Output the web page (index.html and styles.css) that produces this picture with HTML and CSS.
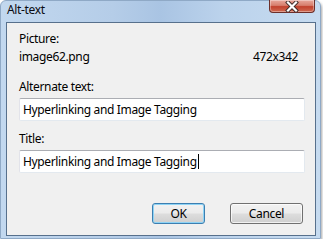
FILE: index.html
```html
<!DOCTYPE html>
<html>
<head>
<meta charset="utf-8">
<link rel="stylesheet" href="styles.css">
</head>
<body>
<div class="window">
  <div class="titlebar">
    <span class="title">Alt-text</span>
    <div class="close">
      <svg width="16" height="11" viewBox="0 0 16 11">
        <path d="M4 1.5 L12 9.5 M12 1.5 L4 9.5" stroke="#3b2a28" stroke-width="4" stroke-linecap="square"/>
        <path d="M4 1.5 L12 9.5 M12 1.5 L4 9.5" stroke="#ffffff" stroke-width="2.2" stroke-linecap="square"/>
      </svg>
    </div>
  </div>
  <div class="content">
    <div class="label first">Picture:</div>
    <div class="info-row"><span>image62.png</span><span class="dims">472x342</span></div>
    <div class="label gap1">Alternate text:</div>
    <div class="field">Hyperlinking and Image Tagging</div>
    <div class="label gap2">Title:</div>
    <div class="field">Hyperlinking and Image Tagging<span class="caret"></span></div>
    <div class="buttons">
      <div class="btn ok">OK</div>
      <div class="btn cancel">Cancel</div>
    </div>
  </div>
</div>
</body>
</html>
```
FILE: styles.css
```css
html, body {
  margin: 0;
  padding: 0;
  background: #ffffff;
}
body {
  font-family: "Noto Sans", "DejaVu Sans", sans-serif;
  font-size: 12px;
  letter-spacing: -0.35px;
  color: #000;
}
.window {
  position: relative;
  width: 321px;
  height: 239px;
  box-sizing: border-box;
  background: linear-gradient(to right, #c2d8ef 0%, #b5cde8 35%, #a9c4e3 50%, #bcd3ec 70%, #c6dbf0 100%);
  border: 1px solid #8fa9c6;
  border-radius: 6px 6px 0 0;
  box-shadow: 1px 2px 3px rgba(0,0,0,0.35);
  display: flex;
  flex-direction: column;
}
.titlebar {
  height: 21px;
  display: flex;
  align-items: flex-start;
}
.title {
  padding-left: 6px;
  line-height: 18px;
  color: #0b0b12;
}
.close {
  position: absolute;
  top: -1px;
  left: 268px;
  width: 46px;
  height: 13px;
  box-sizing: border-box;
  border: 1px solid #6c2f2a;
  border-top: none;
  border-radius: 0 0 4px 4px;
  background: linear-gradient(to bottom, #e8a89c 0%, #d77e6d 45%, #c2412d 55%, #cf6a52 100%);
  display: flex;
  align-items: center;
  justify-content: center;
  box-shadow: inset 0 0 0 1px rgba(255,255,255,0.35);
}
.content {
  margin: 0 4px 2px 5px;
  flex: 1;
  background: #f0f0f0;
  border: 1px solid #57708c;
  padding: 0 0 0 12px;
  display: flex;
  flex-direction: column;
}
.label {
  line-height: 18px;
}
.label.first {
  margin-top: 7px;
}
.info-row {
  line-height: 18px;
  display: flex;
  justify-content: space-between;
  padding-right: 17px;
}
.label.gap1 {
  margin-top: 12px;
  margin-bottom: 2px;
}
.label.gap2 {
  margin-top: 9px;
  margin-bottom: 2px;
}
.field {
  width: 286px;
  height: 23px;
  box-sizing: border-box;
  background: #ffffff;
  border: 1px solid #e3e9ef;
  border-top-color: #abadb3;
  border-left-color: #e2e3ea;
  border-radius: 2px;
  padding-left: 3px;
  line-height: 20px;
  display: flex;
  align-items: center;
}
.caret {
  display: inline-block;
  width: 1px;
  height: 15px;
  background: #000;
  margin-left: 1px;
}
.buttons {
  margin-top: 30px;
  display: flex;
  justify-content: flex-end;
  gap: 25px;
  padding-right: 12px;
}
.btn {
  height: 21px;
  box-sizing: border-box;
  border: 1px solid #707070;
  border-radius: 3px;
  background: linear-gradient(to bottom, #f2f2f2 0%, #ebebeb 48%, #dddddd 52%, #cfcfcf 100%);
  box-shadow: inset 0 0 0 1px rgba(255,255,255,0.7);
  display: flex;
  align-items: center;
  justify-content: center;
  line-height: 18px;
}
.btn.ok {
  width: 53px;
  border-color: #3c7fb1;
  box-shadow: inset 0 0 0 1px #8ed3f5;
}
.btn.cancel {
  width: 73px;
}
```
